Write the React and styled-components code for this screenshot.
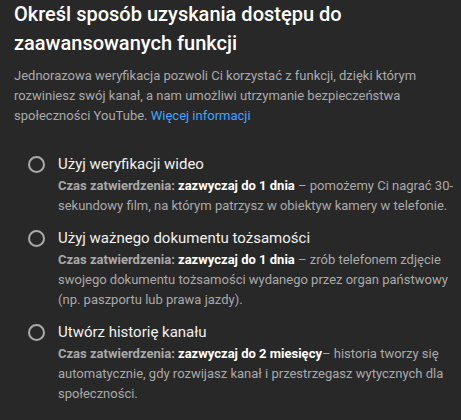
import React from "react";
import styled, { createGlobalStyle } from "styled-components";

const GlobalStyle = createGlobalStyle`
  html, body {
    margin: 0;
    padding: 0;
    background: #282828;
  }
  body {
    font-family: Roboto, "Noto Sans", Arial, sans-serif;
  }
`;

const options = [
  {
    label: "Użyj weryfikacji wideo",
    time: "zazwyczaj do 1 dnia",
    sep: " – ",
    text: "pomożemy Ci nagrać 30-sekundowy film, na którym patrzysz w obiektyw kamery w telefonie.",
  },
  {
    label: "Użyj ważnego dokumentu tożsamości",
    time: "zazwyczaj do 1 dnia",
    sep: " – ",
    text: "zrób telefonem zdjęcie swojego dokumentu tożsamości wydanego przez organ państwowy (np. paszportu lub prawa jazdy).",
  },
  {
    label: "Utwórz historię kanału",
    time: "zazwyczaj do 2 miesięcy",
    sep: "– ",
    text: "historia tworzy się automatycznie, gdy rozwijasz kanał i przestrzegasz wytycznych dla społeczności.",
  },
];

const Option = ({ label, time, sep, text }) => {
  return (
    <OptionRow>
      <Radio role="radio" aria-checked="false" />
      <OptionBody>
        <OptionLabel>{label}</OptionLabel>
        <OptionDesc>
          <b>Czas zatwierdzenia: </b>
          <strong>{time}</strong>
          {sep}
          {text}
        </OptionDesc>
      </OptionBody>
    </OptionRow>
  );
};

const App = () => {
  return (
    <Page>
      <GlobalStyle />
      <Title>Określ sposób uzyskania dostępu do zaawansowanych funkcji</Title>
      <Intro>
        Jednorazowa weryfikacja pozwoli Ci korzystać z funkcji, dzięki którym
        rozwiniesz swój kanał, a nam umożliwi utrzymanie bezpieczeństwa
        społeczności YouTube. <Link href="#">Więcej informacji</Link>
      </Intro>
      <OptionList>
        {options.map((o) => (
          <Option key={o.label} {...o} />
        ))}
      </OptionList>
    </Page>
  );
};

const Page = styled.div`
  width: 461px;
  height: 420px;
  box-sizing: border-box;
  padding: 0 6px 0 14px;
  background: #282828;
  overflow: hidden;
`;

const Title = styled.h1`
  margin: 0;
  font-size: 20px;
  line-height: 29px;
  font-weight: 500;
  color: #ffffff;
  width: 420px;
`;

const Intro = styled.p`
  margin: 8px 0 0;
  max-width: 433px;
  font-size: 13px;
  line-height: 20px;
  color: #aaaaaa;
`;

const Link = styled.a`
  color: #3ea6ff;
  text-decoration: none;
`;

const OptionList = styled.div`
  display: flex;
  flex-direction: column;
  gap: 12px;
  margin-top: 28px;
  padding-left: 14px;
`;

const OptionRow = styled.div`
  display: flex;
  align-items: flex-start;
  gap: 13px;
`;

const Radio = styled.div`
  flex: none;
  width: 17px;
  height: 17px;
  box-sizing: border-box;
  border: 2px solid #aaaaaa;
  border-radius: 50%;
  margin-top: 2px;
`;

const OptionBody = styled.div`
  display: flex;
  flex-direction: column;
  gap: 1px;
`;

const OptionLabel = styled.div`
  font-size: 15px;
  line-height: 21px;
  color: #f1f1f1;
`;

const OptionDesc = styled.div`
  font-size: 13px;
  line-height: 20px;
  color: #aaaaaa;

  b {
    font-weight: 700;
    color: #aaaaaa;
  }

  strong {
    font-weight: 700;
    color: #ffffff;
  }
`;

export default App;
